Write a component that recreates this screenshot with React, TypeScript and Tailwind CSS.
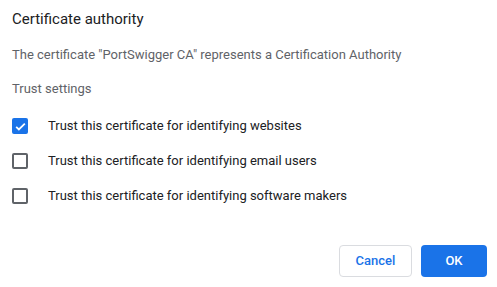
import React, { useState } from 'react';

const options = [
  'Trust this certificate for identifying websites',
  'Trust this certificate for identifying email users',
  'Trust this certificate for identifying software makers',
];

const App: React.FC = () => {
  const [checked, setChecked] = useState<boolean[]>([true, false, false]);

  const toggle = (i: number) => {
    setChecked(prev => prev.map((v, j) => (j === i ? !v : v)));
  };

  return (
    <div className="w-[497px] h-[287px] bg-white font-['Roboto',sans-serif] flex flex-col">
      <div className="pt-[9px] pl-3 text-[15px] leading-5 text-[#202124]">Certificate authority</div>
      <div className="mt-[18px] pl-3 text-[13px] leading-4 text-[#5f6368]">
        The certificate "PortSwigger CA" represents a Certification Authority
      </div>
      <div className="mt-[18px] pl-3 text-[13px] leading-4 text-[#5f6368]">Trust settings</div>

      {/* Checkbox list */}
      <div className="mt-[21px] flex flex-col gap-[19px] pl-3">
        {options.map((label, i) => (
          <label key={label} className="flex items-center h-4 cursor-pointer" onClick={() => toggle(i)}>
            {checked[i] ? (
              <span className="w-4 h-4 rounded-[2px] bg-[#1a73e8] flex items-center justify-center">
                <svg width="13" height="13" viewBox="0 0 24 24" fill="none">
                  <path d="M4 12.5l5 5L20 6.5" stroke="white" strokeWidth="3.2" />
                </svg>
              </span>
            ) : (
              <span className="w-4 h-4 rounded-[2px] border-2 border-[#5f6368]" />
            )}
            <span className="ml-5 text-[13px] leading-4 text-[#202124]">{label}</span>
          </label>
        ))}
      </div>

      {/* Footer buttons */}
      <div className="mt-auto mb-[10px] flex justify-end gap-[9px] pr-[10px]">
        <button className="h-8 w-[73px] rounded border border-[#dadce0] bg-white text-[13px] font-medium text-[#1a73e8]">
          Cancel
        </button>
        <button className="h-8 w-[66px] rounded bg-[#1a73e8] text-[13px] font-medium text-white">
          OK
        </button>
      </div>
    </div>
  );
};

export default App;
